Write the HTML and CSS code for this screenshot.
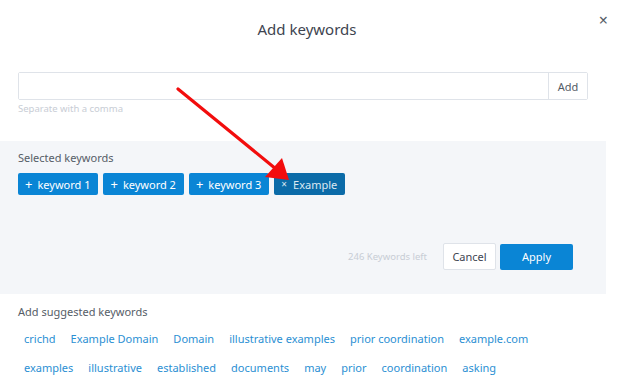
FILE: index.html
```html
<!DOCTYPE html>
<html lang="en">
<head>
    <meta charset="UTF-8" />
    <title>Add keywords</title>
    <link rel="stylesheet" href="styles.css">
</head>
<body>

<div class="modal">
    <button class="close-btn">&times;</button>

    <h2 class="modal-title">Add keywords</h2>

    <div class="input-section">
        <div class="input-group">
            <input type="text" class="kw-input" />
            <button class="add-btn">Add</button>
        </div>
        <div class="hint">Separate with a comma</div>
    </div>

    <div class="selected-panel">
        <div class="section-label">Selected keywords</div>
        <div class="tag-list">
            <span class="tag"><span class="tag-icon">+</span>keyword 1</span>
            <span class="tag"><span class="tag-icon">+</span>keyword 2</span>
            <span class="tag"><span class="tag-icon">+</span>keyword 3</span>
            <span class="tag tag-active"><span class="tag-icon small">&times;</span>Example</span>
        </div>
        <div class="panel-footer">
            <span class="left-count">246 Keywords left</span>
            <button class="btn btn-cancel">Cancel</button>
            <button class="btn btn-apply">Apply</button>
        </div>
    </div>

    <div class="suggested">
        <div class="section-label">Add suggested keywords</div>
        <div class="suggest-row">
            <a class="suggest">crichd</a>
            <a class="suggest">Example Domain</a>
            <a class="suggest">Domain</a>
            <a class="suggest">illustrative examples</a>
            <a class="suggest">prior coordination</a>
            <a class="suggest">example.com</a>
        </div>
        <div class="suggest-row">
            <a class="suggest">examples</a>
            <a class="suggest">illustrative</a>
            <a class="suggest">established</a>
            <a class="suggest">documents</a>
            <a class="suggest">may</a>
            <a class="suggest">prior</a>
            <a class="suggest">coordination</a>
            <a class="suggest">asking</a>
        </div>
    </div>

    <!-- annotation arrow -->
    <svg class="arrow" width="621" height="200" viewBox="0 0 621 200">
        <line x1="178" y1="89" x2="276" y2="169" stroke="#f20d0d" stroke-width="3.2" stroke-linecap="round"/>
        <polygon points="289,180 265,177 282,158" fill="#f20d0d"/>
    </svg>
</div>

</body>
</html>
```

FILE: styles.css
```css
body, html {
    margin: 0;
    padding: 0;
    background: #fff;
    font-family: 'Noto Sans', 'Open Sans', sans-serif;
    color: #3e4450;
}

.modal {
    position: relative;
    width: 606px;
    min-height: 387px;
    background: #fff;
}

.close-btn {
    position: absolute;
    top: 12px;
    right: -2px;
    border: none;
    background: none;
    font-family: inherit;
    font-size: 16px;
    color: #555c66;
    padding: 0;
    line-height: 16px;
    cursor: pointer;
}

.modal-title {
    margin: 0;
    padding: 18px 0 0 8px;
    height: 72px;
    box-sizing: border-box;
    text-align: center;
    font-size: 15px;
    font-weight: 400;
    line-height: 22px;
    color: #3e4450;
}

.input-section {
    padding: 0 18px;
    height: 69px;
}

.input-group {
    display: flex;
    height: 28px;
    border: 1px solid #dfe3e9;
    border-radius: 2px;
    box-sizing: border-box;
}

.kw-input {
    flex: 1;
    border: none;
    outline: none;
    padding: 0 8px;
    font-family: inherit;
}

.add-btn {
    width: 39px;
    border: none;
    border-left: 1px solid #dfe3e9;
    background: #fff;
    font-family: inherit;
    font-size: 11px;
    color: #555c66;
    padding: 0;
}

.hint {
    font-size: 9.5px;
    color: #c8cdd5;
    margin-top: 2px;
}

.selected-panel {
    background: #f4f6f9;
    padding: 9px 18px 0;
    height: 153px;
    box-sizing: border-box;
}

.section-label {
    font-size: 11px;
    line-height: 16px;
    color: #565d67;
}

.tag-list {
    display: flex;
    gap: 5px;
    margin-top: 7px;
}

.tag {
    display: inline-flex;
    align-items: center;
    height: 22px;
    padding: 0 8px 0 7px;
    background: #0a85d5;
    color: #fff;
    font-size: 11px;
    border-radius: 2px;
    box-sizing: border-box;
}

.tag-active {
    background: #0b6ba8;
    color: #dbe8f2;
}

.tag-icon {
    font-size: 13px;
    margin-right: 5px;
    line-height: 1;
}

.tag-icon.small {
    font-size: 10px;
    margin-right: 6px;
}

.panel-footer {
    display: flex;
    align-items: center;
    justify-content: flex-end;
    margin-top: 48px;
    padding-right: 15px;
    gap: 4px;
}

.left-count {
    font-size: 9.5px;
    color: #c8cdd5;
    margin-right: 12px;
}

.btn {
    font-family: inherit;
    font-size: 11px;
    height: 27px;
    border-radius: 2px;
    box-sizing: border-box;
    padding: 0;
}

.btn-cancel {
    width: 53px;
    background: #fff;
    border: 1px solid #dfe3e9;
    color: #3e4450;
}

.btn-apply {
    width: 73px;
    height: 26px;
    background: #0a85d5;
    border: none;
    color: #fff;
}

.suggested {
    padding: 10px 18px 0;
}

.suggest-row {
    display: flex;
    gap: 3px;
    margin-top: 9px;
}

.suggest {
    font-size: 11px;
    line-height: 20px;
    padding: 0 6px;
    color: #2b8fd3;
    cursor: pointer;
}

.arrow {
    position: absolute;
    top: 0;
    left: 0;
    pointer-events: none;
}
```
